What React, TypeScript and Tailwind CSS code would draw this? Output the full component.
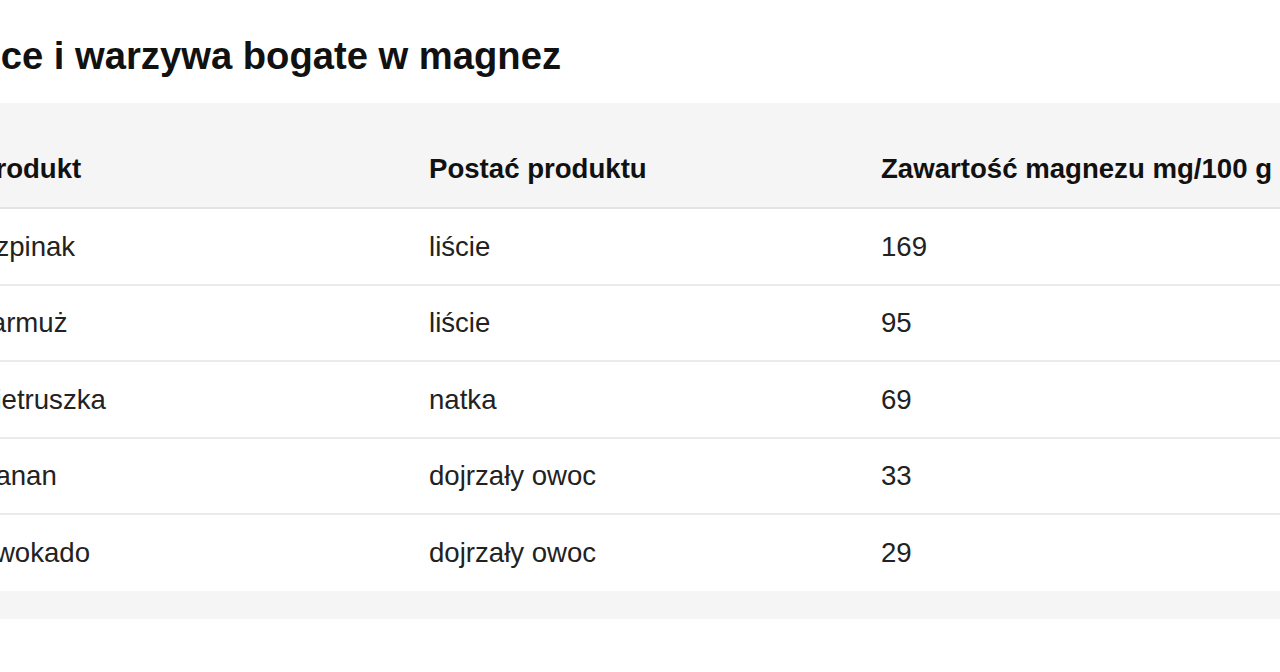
import React from "react";

type Row = { name: string; form: string; mg: string };

const rows: Row[] = [
  { name: "Szpinak", form: "liście", mg: "169" },
  { name: "Jarmuż", form: "liście", mg: "95" },
  { name: "Pietruszka", form: "natka", mg: "69" },
  { name: "Banan", form: "dojrzały owoc", mg: "33" },
  { name: "Awokado", form: "dojrzały owoc", mg: "29" },
];

export default function App() {
  return (
    <div
      className="w-[1280px] h-[672px] overflow-hidden bg-white text-[#222]"
      style={{ fontFamily: '"Liberation Sans", Arial, sans-serif' }}
    >
      <div className="ml-[-82px] w-[1500px]">
        <h2 className="mt-[33px] text-[38.2px] leading-[45px] font-bold text-[#111]">
          Owoce i warzywa bogate w magnez
        </h2>
        <div className="mt-[25px] bg-[#f5f5f5] py-[28px]">
          <table className="w-[1413px] table-fixed border-collapse text-left">
            <thead>
              <tr className="h-[77px] border-b-2 border-[#e3e3e3]">
                <th className="w-[511px] pl-[59px] text-[27.6px] font-bold text-[#111]">Produkt</th>
                <th className="w-[452px] text-[27.6px] font-bold text-[#111]">Postać produktu</th>
                <th className="text-[27.6px] font-bold text-[#111]">Zawartość magnezu mg/100 g</th>
              </tr>
            </thead>
            <tbody className="bg-white">
              {rows.map((r, i) => (
                <tr
                  key={r.name}
                  className={`h-[76.6px] ${i < rows.length - 1 ? "border-b-2 border-[#ebebeb]" : ""}`}
                >
                  <td className="pl-[59px] text-[27.6px]">{r.name}</td>
                  <td className="text-[27.6px]">{r.form}</td>
                  <td className="text-[27.6px]">{r.mg}</td>
                </tr>
              ))}
            </tbody>
          </table>
        </div>
      </div>
    </div>
  );
}
